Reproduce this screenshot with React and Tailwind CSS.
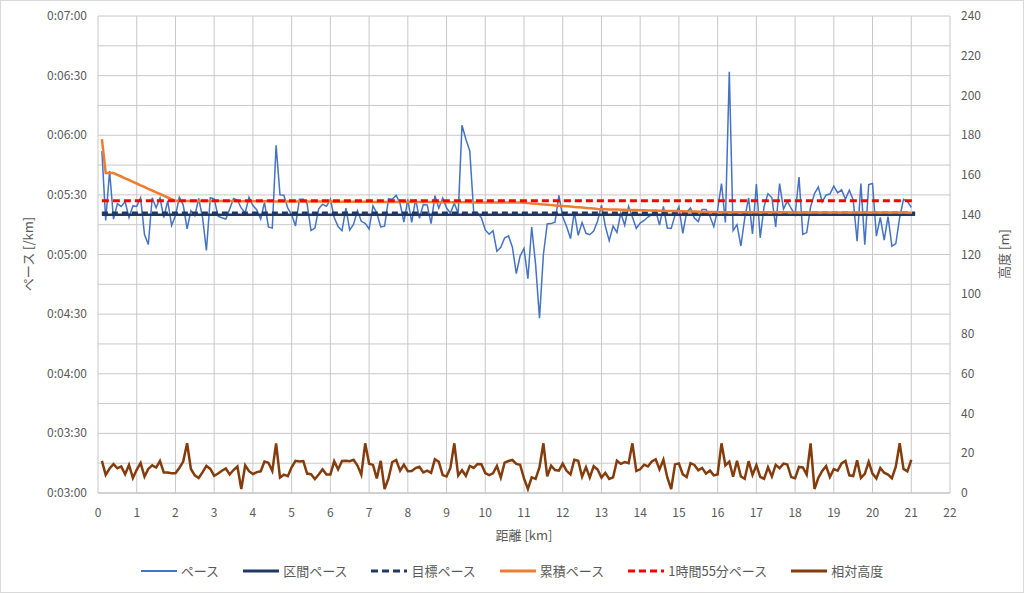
import React from "react";

const X0 = 97, X1 = 949, Y0 = 15, Y1 = 492;
const px = (km) => X0 + (km / 22) * (X1 - X0);
const py = (sec) => Y1 - ((sec - 180) / 240) * (Y1 - Y0);
const pe = (m) => Y1 - (m / 240) * (Y1 - Y0);

let seed = 7;
const rnd = () => {
  seed = (seed * 16807) % 2147483647;
  return seed / 2147483647;
};

const spikes = { 46: 355, 47: 330, 94: 365, 95: 358, 96: 352, 113: 295, 114: 268, 115: 300, 163: 392, 164: 312, 180: 320, 12: 310, 13: 305, 181: 339, 28: 302, 30: 328 };
const pace = [];
const elev = [];
for (let i = 1; i <= 210; i++) {
  let base = 320;
  if (i > 100 && i < 112) base = 310 - (i - 100) * 1.5;
  if (i >= 120 && i < 160) base = 315;
  if (i >= 170) base = 318;
  let v = spikes[i] ?? base + (rnd() - 0.45) * (i > 160 ? 35 : 18);
  if (i === 1) v = 352;
  if (i === 3) v = 342;
  pace.push([i / 10, v]);
  let e = 12 + (rnd() - 0.5) * 10;
  if (i % 23 === 0) e = 25;
  if (i % 37 === 0) e = 2;
  elev.push([i / 10, Math.max(0, e)]);
}
// cumulative pace: quick drop, plateau, then slow settle
const cum = pace.map(([k], i) => {
  let c;
  if (i === 0) c = 358;
  else if (i < 4) c = 341;
  else if (k < 2) c = 341 - (k - 0.4) * 8.8;
  else if (k < 11) c = 327 - (k - 2) * 0.1;
  else if (k < 13) c = 326 - (k - 11) * 1.6;
  else if (k < 16) c = 322.8 - (k - 13) * 0.5;
  else c = 321.3 - (k - 16) * 0.05;
  return [k, c];
});

const line = (pts, f) => pts.map(([k, v], i) => `${i ? "L" : "M"}${px(k).toFixed(1)} ${f(v).toFixed(1)}`).join(" ");

const leftLabels = ["0:07:00", "0:06:30", "0:06:00", "0:05:30", "0:05:00", "0:04:30", "0:04:00", "0:03:30", "0:03:00"];
const legend = [
  ["ペース", "#4472c4", false, 2],
  ["区間ペース", "#1f3864", false, 3],
  ["目標ペース", "#1f3864", true, 3],
  ["累積ペース", "#ed7d31", false, 3],
  ["1時間55分ペース", "#ff0000", true, 3],
  ["相対高度", "#843c0c", false, 3],
];

export default function App() {
  const font = { fontFamily: "'Noto Sans CJK JP', 'Liberation Sans', sans-serif" };
  return (
    <div className="w-[1024px] h-[593px] bg-white border border-[#d9d9d9] flex flex-col" style={font}>
      <svg width="1022" height="546" className="block">
        {Array.from({ length: 17 }).map((_, i) => {
          const y = Y0 + (i * (Y1 - Y0)) / 16;
          return <line key={"h" + i} x1={X0} x2={X1} y1={y} y2={y} stroke="#c8c8c8" strokeWidth="1" />;
        })}
        {Array.from({ length: 23 }).map((_, i) => (
          <line key={"v" + i} x1={px(i)} x2={px(i)} y1={Y0} y2={Y1} stroke="#c8c8c8" strokeWidth="1" />
        ))}
        <line x1={X0} x2={X1} y1={Y1} y2={Y1} stroke="#bfbfbf" />
        {leftLabels.map((t, i) => (
          <text key={t} x="86" y={Y0 + i * ((Y1 - Y0) / 8) + 4} textAnchor="end" fontSize="12" fill="#595959">{t}</text>
        ))}
        {Array.from({ length: 13 }).map((_, i) => (
          <text key={"r" + i} x="960" y={pe(240 - i * 20) + 4} fontSize="12" fill="#595959">{240 - i * 20}</text>
        ))}
        {Array.from({ length: 23 }).map((_, i) => (
          <text key={"x" + i} x={px(i)} y="516" textAnchor="middle" fontSize="12" fill="#595959">{i}</text>
        ))}
        <text x="523" y="539" textAnchor="middle" fontSize="13" fill="#595959">距離 [km]</text>
        <text transform="translate(32 253) rotate(-90)" textAnchor="middle" fontSize="13" fill="#595959">ペース [/km]</text>
        <text transform="translate(1008 253) rotate(-90)" textAnchor="middle" fontSize="13" fill="#595959">高度 [m]</text>
        <path d={line(pace, py)} fill="none" stroke="#4472c4" strokeWidth="1.5" />
        <line x1={px(0.1)} x2={px(21.1)} y1={py(320)} y2={py(320)} stroke="#1f3864" strokeWidth="2.5" />
        <line x1={px(0.1)} x2={px(21.1)} y1={py(321)} y2={py(321)} stroke="#1f3864" strokeWidth="2.5" strokeDasharray="6 4" />
        <path d={line(cum, py)} fill="none" stroke="#ed7d31" strokeWidth="2.5" />
        <line x1={px(0.1)} x2={px(21.1)} y1={py(327)} y2={py(327)} stroke="#ff0000" strokeWidth="3" strokeDasharray="7 4" />
        <path d={line(elev, pe)} fill="none" stroke="#843c0c" strokeWidth="2.5" />
      </svg>
      <div className="flex justify-center items-center gap-6 mt-[14px] text-[13px] text-[#595959]">
        {legend.map(([t, c, dash, w]) => (
          <div key={t} className="flex items-center gap-1">
            <svg width="36" height="6">
              <line x1="0" x2="36" y1="3" y2="3" stroke={c} strokeWidth={w} strokeDasharray={dash ? "7 4" : undefined} />
            </svg>
            <span>{t}</span>
          </div>
        ))}
      </div>
    </div>
  );
}
